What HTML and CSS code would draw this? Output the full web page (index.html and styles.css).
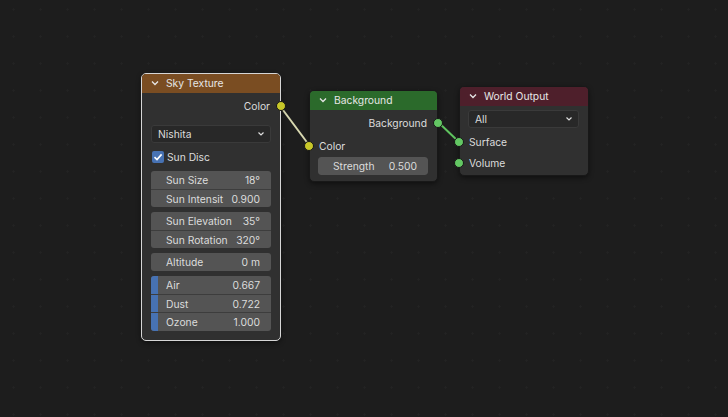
FILE: index.html
```html
<!DOCTYPE html>
<html>
<head>
<meta charset="utf-8">
<link rel="stylesheet" href="styles.css">
</head>
<body>
<div class="canvas">
  <svg class="links" width="728" height="417" viewBox="0 0 728 417">
    <line x1="280" y1="106" x2="309" y2="145" stroke="#d8d8b0" stroke-width="2"/>
    <line x1="438" y1="122" x2="459" y2="142" stroke="#5fc45f" stroke-width="2"/>
  </svg>

  <div class="node sky selected">
    <div class="head head-tex"><svg class="chev" viewBox="0 0 10 10"><path d="M2 3.5 L5 6.5 L8 3.5" fill="none" stroke="#e6e6e6" stroke-width="1.3"/></svg>Sky Texture</div>
    <div class="body">
      <div class="row out">Color<span class="sock yellow right"></span></div>
      <div class="dropdown mt9"><span>Nishita</span><svg class="dchev" viewBox="0 0 10 10"><path d="M2.5 3.5 L5 6 L7.5 3.5" fill="none" stroke="#ddd" stroke-width="1.2"/></svg></div>
      <div class="check mt5"><span class="box"><svg viewBox="0 0 12 12"><path d="M2.5 6.2 L5 8.6 L9.6 3.4" fill="none" stroke="#fff" stroke-width="1.6"/></svg></span>Sun Disc</div>
      <div class="group mt5">
        <div class="field"><span>Sun Size</span><span>18°</span></div>
        <div class="field"><span>Sun Intensit</span><span>0.900</span></div>
      </div>
      <div class="group mt5">
        <div class="field"><span>Sun Elevation</span><span>35°</span></div>
        <div class="field"><span>Sun Rotation</span><span>320°</span></div>
      </div>
      <div class="group mt5">
        <div class="field"><span>Altitude</span><span>0 m</span></div>
      </div>
      <div class="group mt5">
        <div class="field fac"><i class="fill"></i><span>Air</span><span>0.667</span></div>
        <div class="field fac"><i class="fill"></i><span>Dust</span><span>0.722</span></div>
        <div class="field fac"><i class="fill"></i><span>Ozone</span><span>1.000</span></div>
      </div>
    </div>
  </div>

  <div class="node bg">
    <div class="head head-shader"><svg class="chev" viewBox="0 0 10 10"><path d="M2 3.5 L5 6.5 L8 3.5" fill="none" stroke="#e6e6e6" stroke-width="1.3"/></svg>Background</div>
    <div class="body b2">
      <div class="row out">Background<span class="sock green right"></span></div>
      <div class="row in mt3"><span class="sock yellow left"></span>Color</div>
      <div class="group mt1 rel">
        <span class="sock gray left2"></span>
        <div class="field"><span>Strength</span><span>0.500</span></div>
      </div>
    </div>
  </div>

  <div class="node wo">
    <div class="head head-out"><svg class="chev" viewBox="0 0 10 10"><path d="M2 3.5 L5 6.5 L8 3.5" fill="none" stroke="#e6e6e6" stroke-width="1.3"/></svg>World Output</div>
    <div class="body b3">
      <div class="dropdown"><span>All</span><svg class="dchev" viewBox="0 0 10 10"><path d="M2.5 3.5 L5 6 L7.5 3.5" fill="none" stroke="#ddd" stroke-width="1.2"/></svg></div>
      <div class="row in mt4"><span class="sock green left"></span>Surface</div>
      <div class="row in mt1"><span class="sock green left"></span>Volume</div>
    </div>
  </div>
</div>
</body>
</html>
```

FILE: styles.css
```css
html, body {
  margin: 0;
  padding: 0;
  background: #1d1d1d;
}
.canvas {
  position: relative;
  width: 728px;
  height: 417px;
  overflow: hidden;
  background-color: #1d1d1d;
  background-image: radial-gradient(circle, #232323 0.9px, transparent 1.2px);
  background-size: 27px 27px;
  background-position: 0 -4px;
  font-family: Inter, "DejaVu Sans", sans-serif;
  font-size: 10.3px;
  color: #dcdcdc;
}
.links {
  position: absolute;
  left: 0;
  top: 0;
}
.node {
  position: absolute;
  box-sizing: border-box;
  background: #303030;
  border: 1px solid #181818;
  border-radius: 5px;
  box-shadow: 0 2px 5px rgba(0,0,0,0.45);
}
.node.selected {
  border-color: #d6d6d6;
}
.sky { left: 141px; top: 73px; width: 140px; height: 268px; }
.bg { left: 309px; top: 90px; width: 129px; height: 92px; }
.wo { left: 459px; top: 86px; width: 130px; height: 90px; }

.head {
  height: 19px;
  box-sizing: border-box;
  padding-bottom: 2px;
  display: flex;
  align-items: center;
  padding-left: 8px;
  color: #e6e6e6;
  border-radius: 4px 4px 0 0;
}
.head-tex { background: #7a4d22; }
.head-shader { background: #2b6a2b; }
.head-out { background: #4e1f2b; }
.chev {
  width: 10px;
  height: 10px;
  margin-right: 6px;
}
.body {
  padding: 3px 9px 0 9px;
  display: flex;
  flex-direction: column;
}
.b2 { padding: 3px 9px 0 8px; }
.b3 { padding: 4px 9px 0 8px; }

.row {
  position: relative;
  height: 20px;
  display: flex;
  align-items: center;
}
.row.out { justify-content: flex-end; padding-right: 1px; }
.row.in { padding-left: 1px; }

.sock {
  position: absolute;
  width: 8px;
  height: 8px;
  border-radius: 50%;
  border: 1px solid #161616;
  top: 50%;
  transform: translateY(-50%);
}
.sock.right { right: -15px; }
.sock.left { left: -14px; }
.sock.left2 { left: -14px; top: 9px; }
.yellow { background: #c7c729; }
.green { background: #63c763; }
.gray { background: #a1a1a1; }

.mt1 { margin-top: 1px; }
.mt3 { margin-top: 3px; }
.mt4 { margin-top: 4px; }
.mt5 { margin-top: 5px; }
.mt9 { margin-top: 9px; }
.rel { position: relative; overflow: visible; }

.dropdown {
  height: 18px;
  box-sizing: border-box;
  background: #282828;
  border: 1px solid #3a3a3a;
  border-radius: 3px;
  display: flex;
  align-items: center;
  justify-content: space-between;
  padding: 0 4px 0 6px;
  color: #dcdcdc;
}
.dchev { width: 10px; height: 10px; }

.check {
  height: 18px;
  display: flex;
  align-items: center;
  padding-left: 1px;
}
.box {
  width: 12px;
  height: 12px;
  border-radius: 2px;
  background: #4772b3;
  margin-right: 3px;
  display: flex;
}
.box svg { width: 12px; height: 12px; }

.group {
  border-radius: 3px;
  overflow: hidden;
  display: flex;
  flex-direction: column;
}
.rel .field { border-radius: 3px; }
.field {
  position: relative;
  height: 18px;
  box-sizing: border-box;
  background: #545454;
  display: flex;
  align-items: center;
  justify-content: space-between;
  padding: 0 11px 0 15px;
  color: #dcdcdc;
}
.field + .field { border-top: 1px solid #3d3d3d; }
.group .field:nth-child(3) { height: 19px; }
.fill {
  position: absolute;
  left: 0;
  top: 0;
  bottom: 0;
  width: 7px;
  background: #4772b3;
}
.field span { position: relative; }
```
